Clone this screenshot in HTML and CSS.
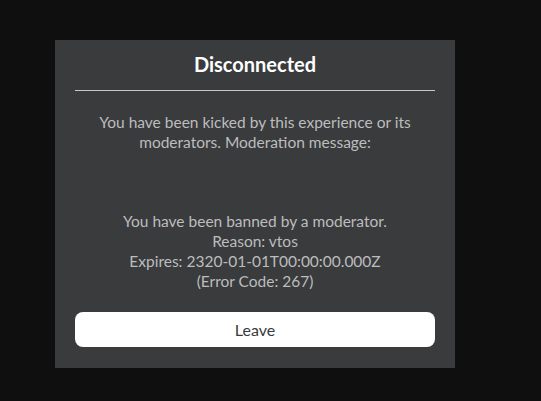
FILE: index.html
```html
<!DOCTYPE html>
<html>
<head>
    <meta charset="UTF-8">
    <link rel="stylesheet" href="styles.css">
</head>
<body>
    <div class="prompt">
        <div class="prompt-title">Disconnected</div>
        <div class="prompt-divider"></div>
        <div class="prompt-message">
            <p>You have been kicked by this experience or its moderators. Moderation message:</p>
            <p class="ban-info">
                You have been banned by a moderator.<br>
                Reason: vtos<br>
                Expires: 2320-01-01T00:00:00.000Z<br>
                (Error Code: 267)
            </p>
        </div>
        <button class="leave-button">Leave</button>
    </div>
</body>
</html>
```

FILE: styles.css
```css
body {
    margin: 0;
    background-color: #0f0f0f;
    font-family: Lato, "Noto Sans", sans-serif;
}
.prompt {
    width: 360px;
    margin: 40px 0 0 55px;
    padding: 0 20px 21px;
    background-color: #393b3d;
    text-align: center;
}
.prompt-title {
    height: 50px;
    line-height: 48px;
    font-size: 20px;
    font-weight: bold;
    color: #fff;
}
.prompt-divider {
    height: 1px;
    background-color: #c8c8c8;
}
.prompt-message {
    padding-top: 21px;
    font-size: 15.5px;
    line-height: 20px;
    color: #bdbdbd;
}
.prompt-message p {
    margin: 0;
}
.ban-info {
    padding-top: 59px;
}
.leave-button {
    display: block;
    width: 100%;
    height: 35px;
    margin-top: 21px;
    border: none;
    border-radius: 8px;
    background-color: #fff;
    color: #393b3d;
    font-family: inherit;
    font-size: 16px;
}
```
